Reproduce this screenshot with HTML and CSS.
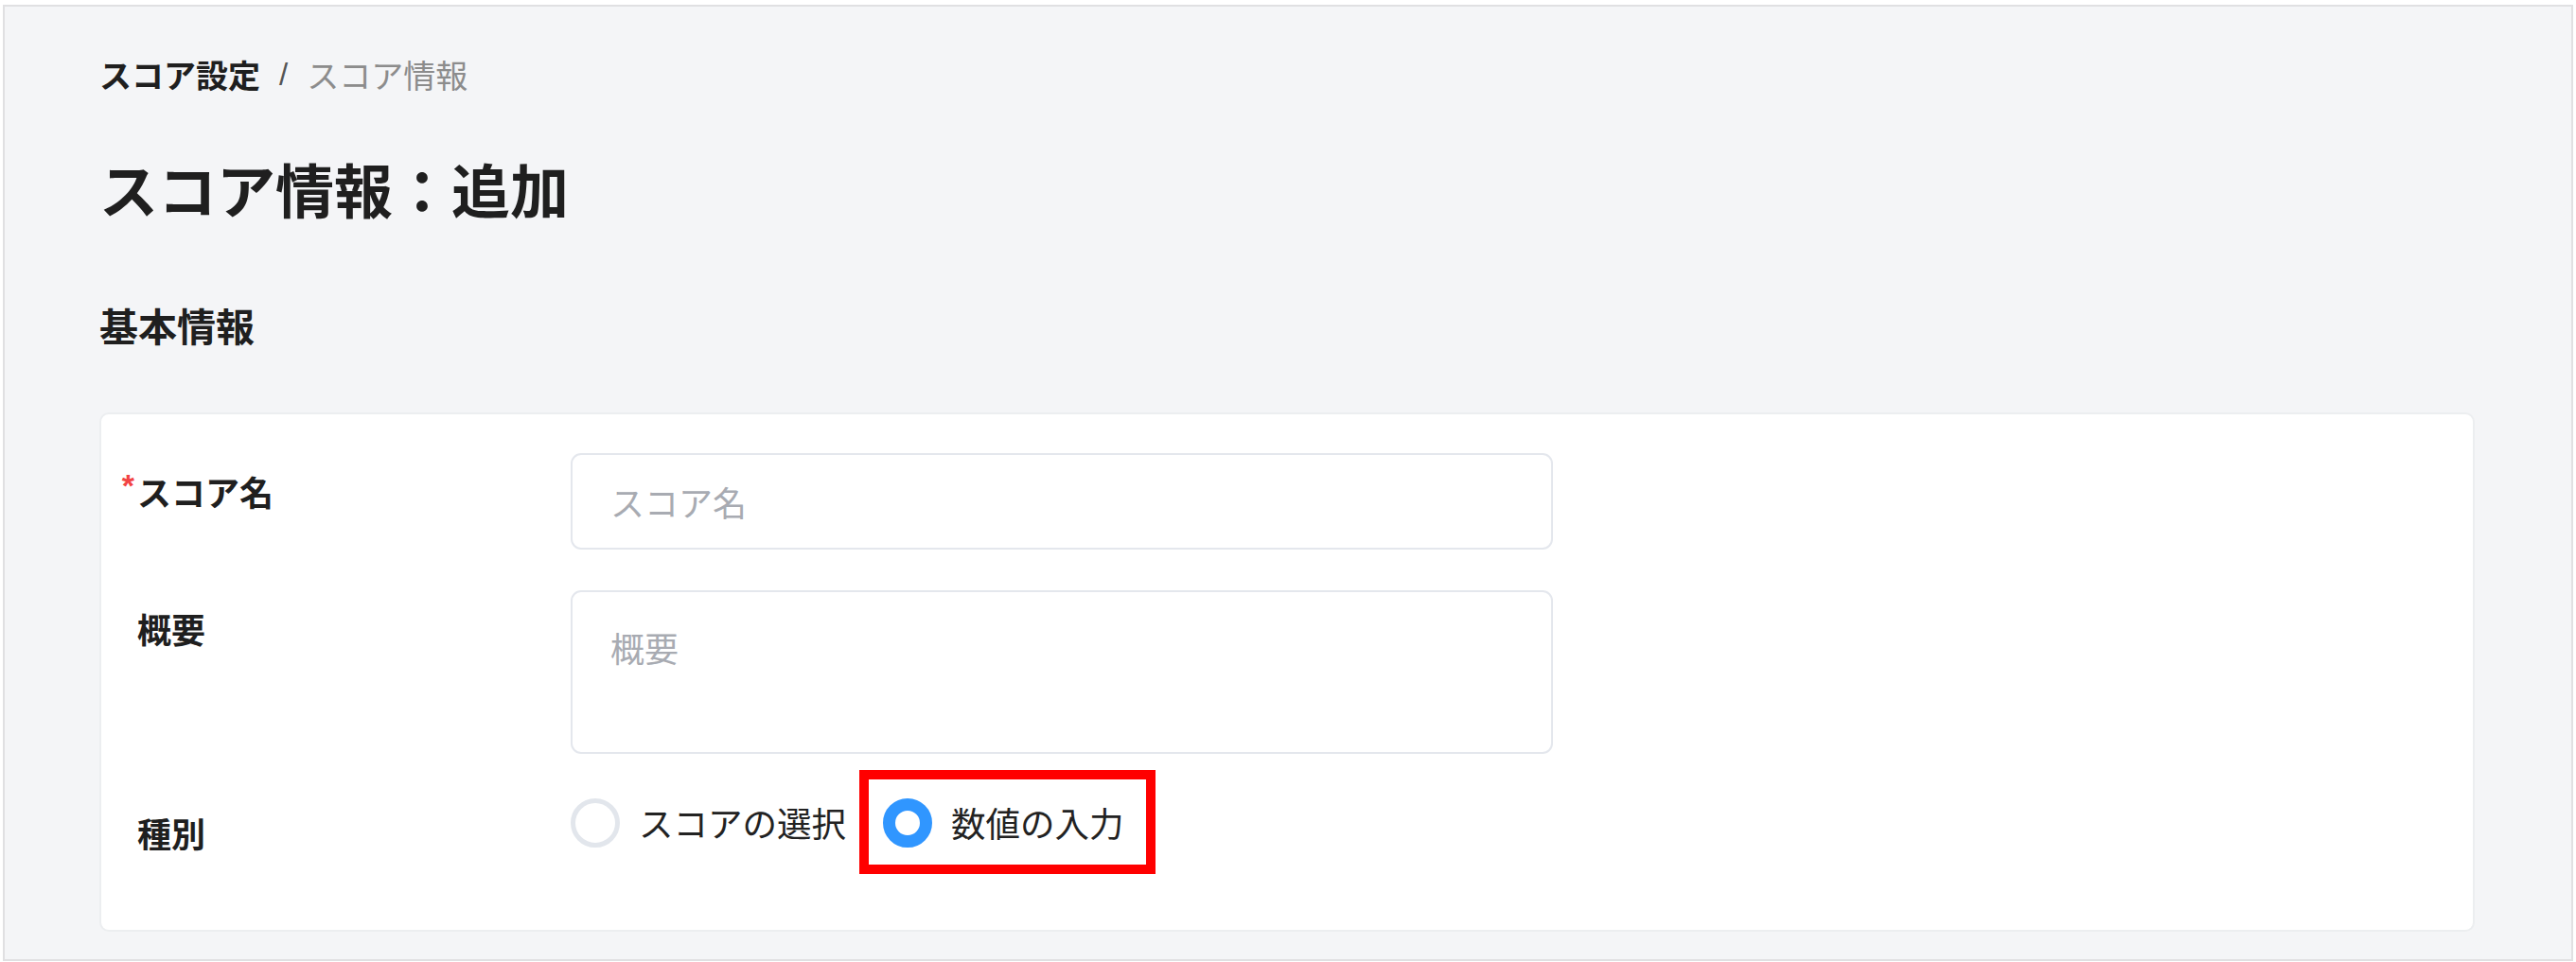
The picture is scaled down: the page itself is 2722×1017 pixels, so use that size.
FILE: index.html
```html
<!DOCTYPE html>
<html lang="ja">
<head>
<meta charset="utf-8">
<title>スコア情報：追加</title>
<link rel="stylesheet" href="styles.css">
</head>
<body>
<div class="frame">
  <nav class="breadcrumb">
    <span class="bc-parent">スコア設定</span>
    <span class="bc-sep">/</span>
    <span class="bc-current">スコア情報</span>
  </nav>
  <h1 class="title">スコア情報：追加</h1>
  <h2 class="section">基本情報</h2>
  <div class="card">
    <div class="row">
      <label class="label"><span class="label-text"><span class="req">*</span>スコア名</span></label>
      <input class="input" type="text" placeholder="スコア名">
    </div>
    <div class="row">
      <label class="label"><span class="label-text">概要</span></label>
      <textarea class="textarea" placeholder="概要"></textarea>
    </div>
    <div class="row row-last">
      <label class="label"><span class="label-text">種別</span></label>
      <div class="radio-group">
        <div class="radio">
          <span class="radio-circle"></span>
          <span class="radio-text">スコアの選択</span>
        </div>
        <div class="radio radio-checked">
          <span class="radio-circle"></span>
          <span class="radio-text">数値の入力</span>
          <span class="highlight"></span>
        </div>
      </div>
    </div>
  </div>
</div>
</body>
</html>
```
FILE: styles.css
```css
* {
  box-sizing: border-box;
}

html, body {
  margin: 0;
  padding: 0;
  background: #ffffff;
}

body {
  font-family: "Noto Sans CJK JP", "Noto Sans", sans-serif;
  color: #222222;
}

.frame {
  margin: 5px 0 0 3px;
  width: 2716px;
  border: 2px solid #e0e0e2;
  background: #f4f5f7;
  padding: 48px 102px 29px 100px;
}

.breadcrumb {
  display: flex;
  align-items: center;
  height: 48px;
  font-size: 34px;
  line-height: 48px;
}

.bc-parent {
  font-weight: 700;
  color: #1f1f1f;
}

.bc-sep {
  margin: 0 20px 0 20px;
  color: #555555;
  font-family: "Liberation Sans", sans-serif;
  font-size: 33px;
}

.bc-current {
  color: #8c8c8c;
}

.title {
  margin: 56px 0 0 0;
  font-size: 62px;
  line-height: 80px;
  font-weight: 700;
  color: #1f1f1f;
}

.section {
  margin: 76px 0 0 0;
  font-size: 41px;
  line-height: 56px;
  font-weight: 700;
  color: #1f1f1f;
}

.card {
  margin-top: 65px;
  background: #ffffff;
  border: 2px solid #eceef0;
  border-radius: 10px;
  padding: 41px 0 79px 38px;
}

.row {
  display: grid;
  grid-template-columns: 458px 1038px;
  align-items: start;
  margin-bottom: 43px;
}

.row-last {
  margin-bottom: 0;
}

.label {
  padding-top: 16px;
  font-size: 36px;
  line-height: 48px;
  font-weight: 700;
  color: #1f1f1f;
}

.label-text {
  position: relative;
}

.req {
  position: absolute;
  right: 100%;
  top: -4px;
  margin-right: 3px;
  color: #f24444;
  font-size: 34px;
  font-family: "Liberation Sans", sans-serif;
  font-weight: 700;
}

.input,
.textarea {
  display: block;
  width: 1038px;
  border: 2px solid #e4e7ed;
  border-radius: 11px;
  background: #ffffff;
  font-family: "Noto Sans CJK JP", "Noto Sans", sans-serif;
  font-size: 36px;
  line-height: 48px;
  color: #222222;
  outline: none;
  margin: 0;
}

.input {
  height: 102px;
  padding: 0 40px;
}

.textarea {
  height: 173px;
  padding: 34px 40px;
  resize: none;
}

.input::placeholder,
.textarea::placeholder {
  color: #a8abb2;
}

.radio-group {
  display: flex;
  align-items: center;
  height: 60px;
  gap: 39px;
}

.radio {
  position: relative;
  display: flex;
  align-items: center;
  gap: 20px;
}

.radio-circle {
  display: block;
  width: 52px;
  height: 52px;
  border-radius: 50%;
  border: 5px solid #e2e6ec;
  background: #ffffff;
}

.radio-checked .radio-circle {
  border: 13px solid #3096ff;
}

.radio-text {
  font-size: 36.5px;
  line-height: 48px;
  color: #222222;
}

.highlight {
  position: absolute;
  left: -25px;
  top: -30px;
  right: -33px;
  bottom: -28px;
  border: 10px solid #ff0000;
  pointer-events: none;
}
```
